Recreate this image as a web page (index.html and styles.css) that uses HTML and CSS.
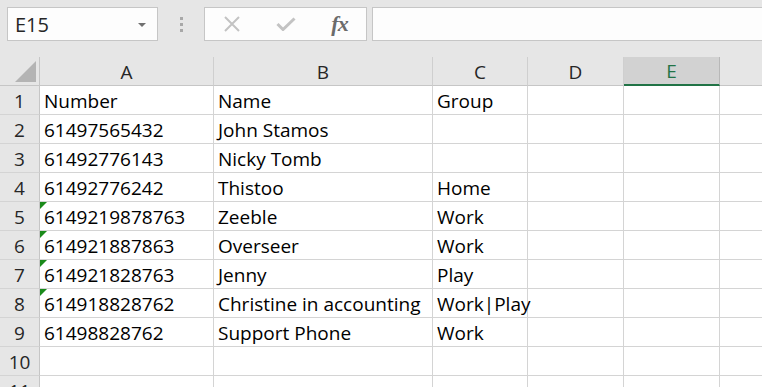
FILE: index.html
```html
<!DOCTYPE html>
<html>
<head>
<meta charset="utf-8">
<link rel="stylesheet" href="styles.css">
</head>
<body>
<div class="app">
  <div class="toolbar">
    <div class="namebox"><span class="nb-text">E15</span><span class="caret"></span></div>
    <div class="sep"><i></i><i></i><i></i></div>
    <div class="fxbox">
      <span class="slot"><svg width="18" height="16" viewBox="0 0 18 16"><path d="M2 1 L16 15 M16 1 L2 15" stroke="#c3c3c3" stroke-width="2" fill="none"/></svg></span>
      <span class="slot"><svg width="20" height="14" viewBox="0 0 20 14"><path d="M1.5 7 L7 12.5 L18.5 1.5" stroke="#c3c3c3" stroke-width="3" fill="none"/></svg></span>
      <span class="slot fx">fx</span>
    </div>
    <div class="formula"></div>
  </div>
  <div class="sheet">
    <div class="corner"><span class="tri"></span></div>
    <div class="ch">A</div><div class="ch">B</div><div class="ch">C</div><div class="ch">D</div><div class="ch sel">E</div><div class="ch last"></div>

    <div class="rh">1</div><div class="c">Number</div><div class="c">Name</div><div class="c">Group</div><div class="c"></div><div class="c"></div><div class="c last"></div>
    <div class="rh">2</div><div class="c">61497565432</div><div class="c">John Stamos</div><div class="c"></div><div class="c"></div><div class="c"></div><div class="c last"></div>
    <div class="rh">3</div><div class="c">61492776143</div><div class="c">Nicky Tomb</div><div class="c"></div><div class="c"></div><div class="c"></div><div class="c last"></div>
    <div class="rh">4</div><div class="c">61492776242</div><div class="c">Thistoo</div><div class="c">Home</div><div class="c"></div><div class="c"></div><div class="c last"></div>
    <div class="rh">5</div><div class="c flag">6149219878763</div><div class="c">Zeeble</div><div class="c">Work</div><div class="c"></div><div class="c"></div><div class="c last"></div>
    <div class="rh">6</div><div class="c flag">614921887863</div><div class="c">Overseer</div><div class="c">Work</div><div class="c"></div><div class="c"></div><div class="c last"></div>
    <div class="rh">7</div><div class="c flag">614921828763</div><div class="c">Jenny</div><div class="c">Play</div><div class="c"></div><div class="c"></div><div class="c last"></div>
    <div class="rh">8</div><div class="c flag">614918828762</div><div class="c">Christine in accounting</div><div class="c over">Work|Play</div><div class="c"></div><div class="c"></div><div class="c last"></div>
    <div class="rh">9</div><div class="c">61498828762</div><div class="c">Support Phone</div><div class="c">Work</div><div class="c"></div><div class="c"></div><div class="c last"></div>
    <div class="rh">10</div><div class="c"></div><div class="c"></div><div class="c"></div><div class="c"></div><div class="c"></div><div class="c last"></div>
    <div class="rh">11</div><div class="c"></div><div class="c"></div><div class="c"></div><div class="c"></div><div class="c"></div><div class="c last"></div>
  </div>
</div>
</body>
</html>
```

FILE: styles.css
```css
* { box-sizing: border-box; }
html, body { margin: 0; padding: 0; }
body {
  width: 762px;
  height: 387px;
  overflow: hidden;
  background: #e6e6e6;
  font-family: "Open Sans", "Liberation Sans", sans-serif;
  font-size: 19px;
  color: #000;
}
.app { display: flex; flex-direction: column; }

.toolbar {
  height: 57px;
  display: flex;
  align-items: flex-start;
  padding: 7px 0 0 7px;
}
.namebox {
  width: 151px;
  height: 34px;
  background: #fdfdfd;
  border: 1px solid #c6c6c6;
  display: flex;
  align-items: center;
  justify-content: space-between;
  padding: 0 11px 0 7px;
}
.nb-text { color: #262626; line-height: 30px; font-size: 20px; padding-top: 1px; }
.caret {
  width: 0; height: 0;
  border-left: 4px solid transparent;
  border-right: 4px solid transparent;
  border-top: 4px solid #707070;
  margin-top: 1px;
}
.sep {
  width: 46px;
  height: 34px;
  display: flex;
  flex-direction: column;
  align-items: center;
  justify-content: center;
  gap: 3px;
}
.sep i { display: block; width: 3px; height: 3px; background: #a8a8a8; }
.fxbox {
  width: 163px;
  height: 34px;
  background: #fdfdfd;
  border: 1px solid #c6c6c6;
  display: flex;
  align-items: center;
}
.slot {
  width: 54px;
  display: flex;
  align-items: center;
  justify-content: center;
}
.slot:last-child { width: 53px; }
.slot svg { display: block; }
.fx {
  font-family: "Liberation Serif", serif;
  font-style: italic;
  font-weight: bold;
  font-size: 22px;
  color: #6b6b6b;
  line-height: 30px;
  letter-spacing: -1px;
}
.formula {
  flex: 1;
  height: 34px;
  margin-left: 5px;
  background: #fdfdfd;
  border: 1px solid #c6c6c6;
  border-right: none;
}

.sheet {
  display: grid;
  grid-template-columns: 40px 174px 219px 95px 96px 96px 1fr;
  grid-auto-rows: 29px;
  background: #fff;
}
.corner {
  background: #e6e6e6;
  border-right: 1px solid #c6c6c6;
  border-bottom: 1px solid #c6c6c6;
  position: relative;
}
.tri {
  position: absolute;
  left: 15px;
  top: 4px;
  width: 0; height: 0;
  border-left: 21px solid transparent;
  border-bottom: 21px solid #b4b4b4;
}
.ch {
  background: #e6e6e6;
  border-right: 1px solid #cfcfcf;
  border-bottom: 1px solid #c6c6c6;
  text-align: center;
  padding-top: 2px;
  line-height: 26px;
  color: #262626;
}
.ch.sel {
  background: #d2d2d2;
  color: #217346;
  border-right-color: #b8b8b8;
  border-bottom: 2px solid #217346;
  line-height: 25px;
}
.ch.last { border-right: none; }
.rh {
  background: #e6e6e6;
  border-right: 1px solid #c6c6c6;
  border-bottom: 1px solid #d4d4d4;
  text-align: center;
  padding-top: 2px;
  line-height: 26px;
  color: #262626;
}
.c {
  border-right: 1px solid #d4d4d4;
  border-bottom: 1px solid #d4d4d4;
  padding-left: 4px;
  padding-top: 2px;
  line-height: 26px;
  white-space: nowrap;
  position: relative;
}
.c.last { border-right: none; }
.c.over { overflow: visible; z-index: 1; }
.flag::before {
  content: "";
  position: absolute;
  left: 0;
  top: 0;
  width: 0; height: 0;
  border-top: 7px solid #1a8a1a;
  border-right: 7px solid transparent;
}
```
